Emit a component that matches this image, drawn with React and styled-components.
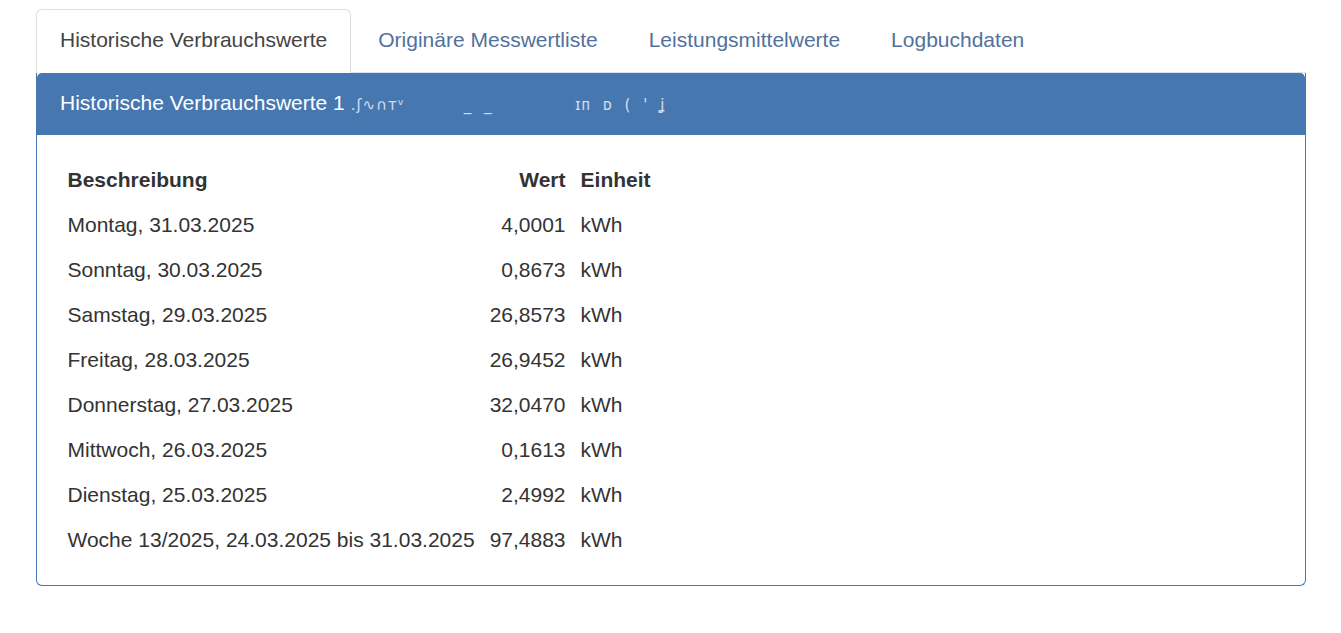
import React from 'react';
import styled, { createGlobalStyle } from 'styled-components';

const GlobalStyle = createGlobalStyle`
	html, body {
		margin: 0;
		padding: 0;
		background: #ffffff;
	}
	body {
		font-family: 'Liberation Sans', Arial, sans-serif;
		font-size: 21px;
		line-height: 30px;
		color: #333333;
	}
`;

const Page = styled.div`
	padding: 9px 35px 40px 36px;
`;

const Tabs = styled.ul`
	display: flex;
	list-style: none;
	margin: 0;
	padding: 0;
	border-bottom: 1px solid #dbe3ec;
`;

const Tab = styled.li`
	margin-right: 3px;
	margin-bottom: -1px;
	a {
		display: block;
		padding: 15px 23px 17px 23px;
		line-height: 30px;
		font-size: 21px;
		text-decoration: none;
		border: 1px solid ${p => (p.$active ? '#dddddd' : 'transparent')};
		border-bottom-color: ${p => (p.$active ? '#ffffff' : 'transparent')};
		border-radius: 6px 6px 0 0;
		background: ${p => (p.$active ? '#ffffff' : 'transparent')};
		color: ${p => (p.$active ? '#444444' : '#52719c')};
	}
`;

const Panel = styled.div`
	border: 1px solid #4777b0;
	border-top: none;
	border-radius: 0 0 6px 6px;
	background: #ffffff;
`;

const PanelHeading = styled.div`
	background: #4777b0;
	color: #ffffff;
	padding: 15px 23px 17px 23px;
	height: 30px;
	line-height: 30px;
	font-size: 21px;
	border-radius: 5px 5px 0 0;
	white-space: nowrap;
`;

const Redacted = styled.span`
	font-family: 'DejaVu Sans', sans-serif;
	font-size: 15px;
	opacity: 0.75;
	letter-spacing: 1px;
	word-spacing: 6px;
`;

const PanelBody = styled.div`
	padding: 22px 23px 23px 23px;
`;

const Table = styled.table`
	border-collapse: collapse;
	border-spacing: 0;
	th, td {
		padding: 7.5px 7.5px;
		line-height: 30px;
		font-size: 21px;
		white-space: nowrap;
		vertical-align: top;
	}
	th {
		font-weight: bold;
		text-align: left;
	}
	.num {
		text-align: right;
	}
`;

const rows = [
	['Montag, 31.03.2025', '4,0001'],
	['Sonntag, 30.03.2025', '0,8673'],
	['Samstag, 29.03.2025', '26,8573'],
	['Freitag, 28.03.2025', '26,9452'],
	['Donnerstag, 27.03.2025', '32,0470'],
	['Mittwoch, 26.03.2025', '0,1613'],
	['Dienstag, 25.03.2025', '2,4992'],
	['Woche 13/2025, 24.03.2025 bis 31.03.2025', '97,4883'],
];

const tabs = [
	'Historische Verbrauchswerte',
	'Originäre Messwertliste',
	'Leistungsmittelwerte',
	'Logbuchdaten',
];

const App = () => {
	return (
		<Page>
			<GlobalStyle />
			<Tabs>
				{tabs.map((t, i) => (
					<Tab key={t} $active={i === 0}>
						<a href="#">{t}</a>
					</Tab>
				))}
			</Tabs>
			<Panel>
				<PanelHeading>
					Historische Verbrauchswerte 1 <Redacted>.ʃ∿∩ᴛᵛ&nbsp;&nbsp;&nbsp;&nbsp;&nbsp;_ _&nbsp;&nbsp;&nbsp;&nbsp;&nbsp;&nbsp;&nbsp;ɪᴨ ᴅ ( ' ʝ</Redacted>
				</PanelHeading>
				<PanelBody>
					<Table>
						<thead>
							<tr>
								<th>Beschreibung</th>
								<th className="num">Wert</th>
								<th>Einheit</th>
							</tr>
						</thead>
						<tbody>
							{rows.map(([label, value]) => (
								<tr key={label}>
									<td>{label}</td>
									<td className="num">{value}</td>
									<td>kWh</td>
								</tr>
							))}
						</tbody>
					</Table>
				</PanelBody>
			</Panel>
		</Page>
	);
};

export default App;
